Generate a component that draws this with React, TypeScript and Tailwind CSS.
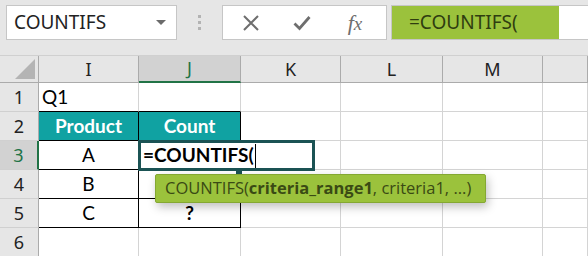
import React from 'react'

const COLS = ['I', 'J', 'K', 'L', 'M', '']
const COL_W = ['w-[100px]', 'w-[102px]', 'w-[100px]', 'w-[102px]', 'w-[100px]', 'w-[45px]']

// cell content keyed by row, col index
const CELLS: Record<number, Record<number, string>> = {
  1: { 0: 'Q1' },
  2: { 0: 'Product', 1: 'Count' },
  3: { 0: 'A' },
  4: { 0: 'B' },
  5: { 0: 'C', 1: '?' },
}

const inTable = (r: number, c: number) => c <= 1 && r >= 2 && r <= 5

function Cell({ r, c }: { r: number; c: number }) {
  const text = CELLS[r]?.[c]
  const table = inTable(r, c)
  const bottomBlack = c <= 1 && r >= 1 && r <= 5
  const isHead = r === 2 && table
  return (
    <div
      className={[
        COL_W[c],
        'h-[29px] shrink-0 flex items-center border-r border-b',
        table ? 'border-r-black' : 'border-r-[#d4d4d4]',
        bottomBlack ? 'border-b-black' : 'border-b-[#d4d4d4]',
        isHead ? 'bg-[#10a2a2] text-white font-bold justify-center' : 'bg-white text-black',
        table && !isHead ? 'justify-center' : '',
        r === 5 && c === 1 ? 'font-bold' : '',
        r === 1 ? 'pl-[3px]' : '',
      ].join(' ')}
    >
      {text}
    </div>
  )
}

export default function App() {
  return (
    <div className="relative w-[588px] h-[256px] overflow-hidden bg-[#e6e6e6] font-['Lato',sans-serif]">
      {/* formula bar */}
      <div className="h-[55px] flex items-start pt-[5px]">
        <div className="ml-[6px] w-[171px] h-[35px] bg-white border border-[#c6c6c6] flex items-center justify-between pl-[7px] pr-[10px]">
          <span className="font-['Noto_Sans',sans-serif] text-[19px] text-[#222]">COUNTIFS</span>
          <span className="w-0 h-0 border-l-[5px] border-r-[5px] border-t-[5px] border-l-transparent border-r-transparent border-t-[#6b6b6b]" />
        </div>
        <div className="w-[45px] h-[35px] flex flex-col items-center justify-center gap-[3px]">
          <span className="w-[3px] h-[3px] bg-[#b3b3b3]" />
          <span className="w-[3px] h-[3px] bg-[#b3b3b3]" />
          <span className="w-[3px] h-[3px] bg-[#b3b3b3]" />
        </div>
        <div className="w-[165px] h-[35px] bg-white border border-[#c6c6c6] flex items-center">
          <div className="w-[56px] flex justify-center">
            <svg width="18" height="18" viewBox="0 0 18 18">
              <path d="M2 2 L16 16 M16 2 L2 16" stroke="#6e6e6e" strokeWidth="2" />
            </svg>
          </div>
          <div className="w-[46px] flex justify-center">
            <svg width="18" height="16" viewBox="0 0 18 16">
              <path d="M1.5 8.5 L6.5 13.5 L16.5 2" stroke="#6e6e6e" strokeWidth="2.8" fill="none" />
            </svg>
          </div>
          <div className="w-[60px] flex justify-center">
            <span className="font-['Liberation_Serif',serif] italic text-[22px] text-[#6e6e6e] leading-none">
              f<span className="text-[19px]">x</span>
            </span>
          </div>
        </div>
        <div className="ml-[4px] flex-1 h-[35px] bg-white border border-[#c6c6c6] border-r-0 flex">
          <div className="w-[167px] h-full bg-[#9bc23c] flex items-center pl-[17px] font-['Noto_Sans',sans-serif] text-[19px] text-[#2f3d10]">
            =COUNTIFS(
          </div>
        </div>
      </div>

      {/* column headers */}
      <div className="flex h-[28px] border-t border-[#d0d0d0]">
        <div className="w-[39px] shrink-0 border-r border-b border-[#ababab] relative">
          <svg className="absolute right-[3px] bottom-[3px]" width="20" height="20" viewBox="0 0 20 20">
            <polygon points="20,0 20,20 0,20" fill="#b4b4b4" />
          </svg>
        </div>
        {COLS.map((c, i) => (
          <div
            key={i}
            className={[
              COL_W[i],
              'shrink-0 flex items-center justify-center font-["Noto_Sans",sans-serif] text-[18px] border-r',
              i === 1
                ? 'bg-[#d2d2d2] text-[#217346] border-b-[2px] border-b-[#217346] border-r-[#ababab]'
                : 'text-[#222] border-b border-b-[#ababab] border-r-[#ababab]',
            ].join(' ')}
          >
            {c}
          </div>
        ))}
      </div>

      {/* rows */}
      {[1, 2, 3, 4, 5, 6].map(r => (
        <div key={r} className="flex text-[19px]">
          <div
            className={[
              'w-[39px] h-[29px] shrink-0 flex items-center justify-center font-["Noto_Sans",sans-serif] text-[18px] border-b border-b-[#d0d0d0]',
              r === 3
                ? 'bg-[#d2d2d2] text-[#217346] border-r-[2px] border-r-[#217346]'
                : 'bg-[#e6e6e6] text-[#222] border-r border-r-[#ababab]',
            ].join(' ')}
          >
            {r}
          </div>
          {COLS.map((_, c) => (
            <Cell key={c} r={r} c={c} />
          ))}
        </div>
      ))}

      {/* active cell in edit mode */}
      <div className="absolute left-[138px] top-[140px] w-[177px] h-[31px] border-[3px] border-[#1b5354] bg-white flex items-center pl-[2px] text-[19px] font-bold text-black">
        =COUNTIFS(
        <span className="ml-[1px] w-px h-[24px] bg-black" />
      </div>
      <div className="absolute left-[236px] top-[169px] w-[6px] h-[6px] bg-[#1b5354]" />

      {/* tooltip */}
      <div className="absolute left-[155px] top-[174px] w-[331px] h-[29px] rounded-[2px] bg-[#9bc23c] border border-[#84a832] shadow-[2px_4px_10px_rgba(0,0,0,0.25)] flex items-center pl-[9px] font-['Open_Sans',sans-serif] text-[16.5px] text-[#3a4a14] whitespace-nowrap">
        COUNTIFS(<span className="font-bold">criteria_range1</span>, criteria1, ...)
      </div>
    </div>
  )
}
